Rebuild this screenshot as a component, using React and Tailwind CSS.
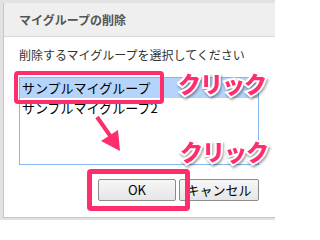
import React from 'react';

const jp = '"Noto Sans CJK JP", "Noto Sans", sans-serif';

// Callout text with white outline, as in the screenshot annotations
const ClickLabel = ({ className }) => (
  <span
    className={`absolute text-[23px] font-black leading-none tracking-[-1px] text-[#fe2d6c] [-webkit-text-stroke:4px_white] [paint-order:stroke_fill] [filter:drop-shadow(1px_2px_1px_rgba(0,0,0,0.35))] ${className}`}
  >
    クリック
  </span>
);

export default function App() {
  return (
    <div
      className="relative w-[275px] h-[220px] overflow-hidden bg-[#e2e2e2] pt-[3px] pl-[3px]"
      style={{ fontFamily: jp }}
    >
      <div className="h-[215px] bg-white border-l border-b border-[#c6c6c6] flex flex-col">
        {/* Header */}
        <div className="h-[34px] shrink-0 bg-[#efefef] border-b border-[#d9d9d9] flex items-center pl-[15px] text-[12px] font-bold text-[#555]">
          マイグループの削除
        </div>

        {/* Body */}
        <div className="pl-[15px] pt-[10px]">
          <p className="text-[12px] leading-[16px] text-[#333]">
            削除するマイグループを選択してください
          </p>

          <div className="mt-[14px] w-[240px] h-[88px] border border-[#86b6ee] text-[13px] text-black">
            <div className="h-[20px] leading-[20px] px-[2px] bg-[#b4d4fb]">サンプルマイグループ</div>
            <div className="h-[20px] leading-[20px] px-[2px]">サンプルマイグループ2</div>
          </div>

          <div className="mt-[14px] w-[240px] flex justify-end gap-[3px]">
            <button className="w-[78px] h-[22px] rounded-[2px] border border-[#8c8c8c] bg-gradient-to-b from-[#f6f6f6] to-[#e6e6e6] text-[13px] text-black">
              OK
            </button>
            <button className="w-[80px] h-[22px] rounded-[2px] border border-[#8c8c8c] bg-gradient-to-b from-[#f6f6f6] to-[#e6e6e6] text-[13px] text-black">
              キャンセル
            </button>
          </div>
        </div>
      </div>

      {/* Annotations */}
      <div className="absolute left-[14px] top-[71px] w-[150px] h-[33px] rounded-[4px] border-[4px] border-[#fe2d6c]" />
      <div className="absolute left-[87px] top-[169px] w-[103px] h-[42px] rounded-[4px] border-[5px] border-[#fe2d6c]" />
      <ClickLabel className="left-[178px] top-[72px]" />
      <ClickLabel className="left-[180px] top-[140px]" />
      <svg className="absolute left-0 top-0" width="275" height="220" viewBox="0 0 275 220">
        <line x1="97" y1="117" x2="111" y2="137" stroke="#fe2d6c" strokeWidth="4" />
        <polygon points="101,141 118,130 120,151" fill="#fe2d6c" />
      </svg>
    </div>
  );
}
